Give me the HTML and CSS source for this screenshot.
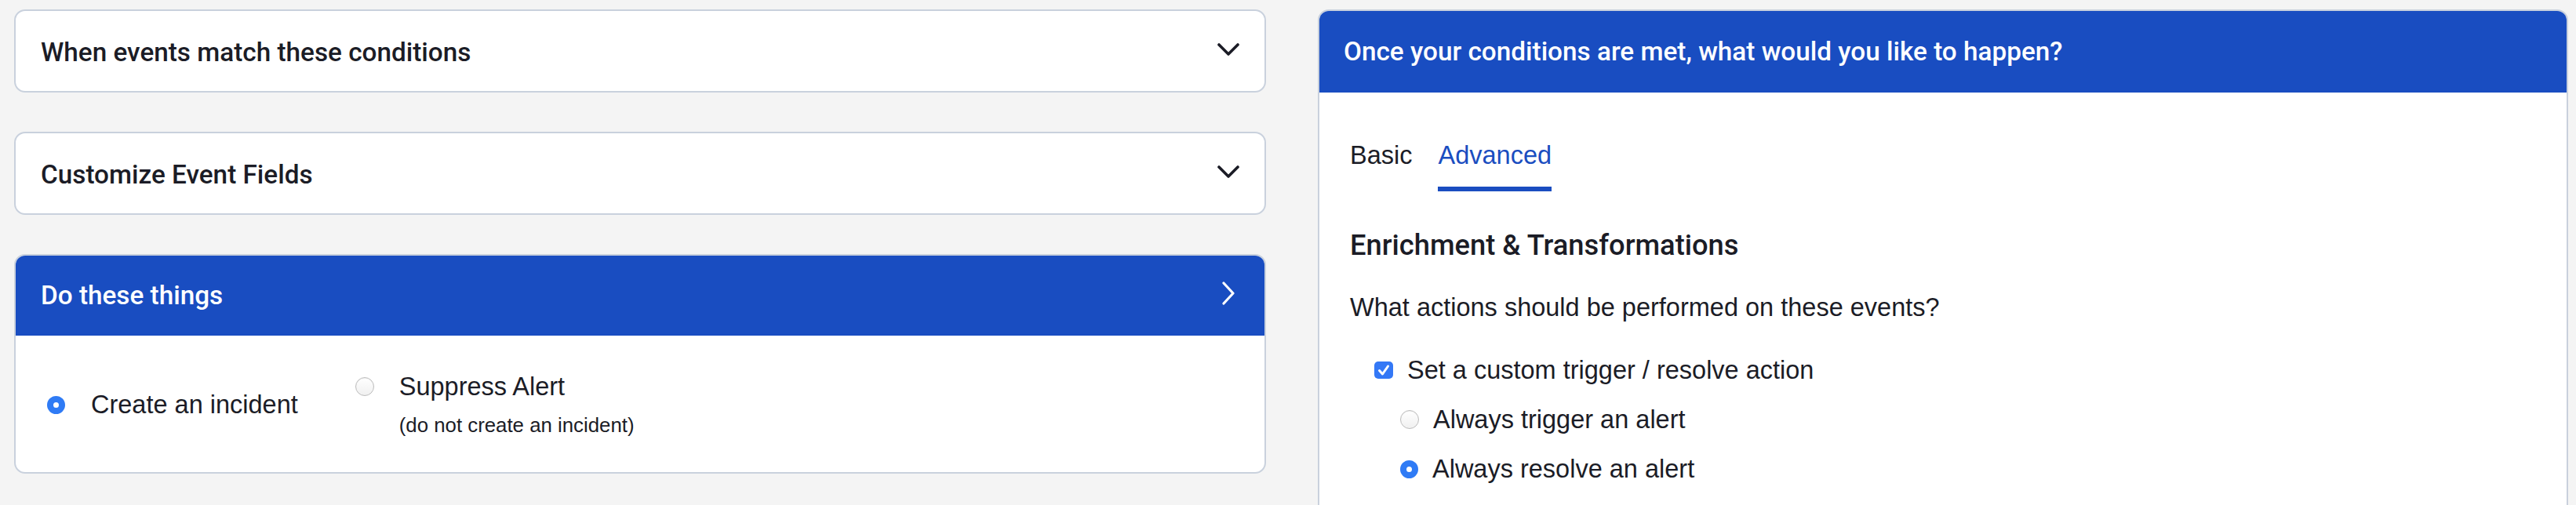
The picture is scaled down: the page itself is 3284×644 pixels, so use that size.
FILE: index.html
```html
<!DOCTYPE html>
<html lang="en">
<head>
<meta charset="utf-8">
<title>Event rule</title>
<link rel="stylesheet" href="styles.css">
</head>
<body>
<div class="page">
  <div class="left-col">
    <section class="card">
      <div class="card-head">
        <span class="card-title">When events match these conditions</span>
        <svg class="chev" width="28" height="28" viewBox="0 0 28 28"><polyline points="2,6 14,18 26,6" fill="none" stroke="#1b1c26" stroke-width="3.6" stroke-linecap="round" stroke-linejoin="round"/></svg>
      </div>
    </section>
    <section class="card">
      <div class="card-head">
        <span class="card-title">Customize Event Fields</span>
        <svg class="chev" width="28" height="28" viewBox="0 0 28 28"><polyline points="2,6 14,18 26,6" fill="none" stroke="#1b1c26" stroke-width="3.6" stroke-linecap="round" stroke-linejoin="round"/></svg>
      </div>
    </section>
    <section class="card">
      <div class="card-head blue">
        <span class="card-title">Do these things</span>
        <svg class="chev chev-r" width="28" height="30" viewBox="0 0 28 30"><polyline points="8,2 20,15 8,28" fill="none" stroke="#ffffff" stroke-width="3.2" stroke-linecap="round" stroke-linejoin="round"/></svg>
      </div>
      <div class="card-body">
        <div class="options">
          <div class="option">
            <span class="radio checked"></span>
            <span class="opt-label">Create an incident</span>
          </div>
          <div class="option">
            <span class="radio"></span>
            <span class="opt-label">Suppress Alert</span>
            <span class="opt-sub">(do not create an incident)</span>
          </div>
        </div>
      </div>
    </section>
  </div>

  <section class="panel">
    <div class="card-head blue panel-head">
      <span class="card-title">Once your conditions are met, what would you like to happen?</span>
    </div>
    <div class="panel-body">
      <nav class="tabs">
        <span class="tab">Basic</span>
        <span class="tab active">Advanced</span>
      </nav>
      <h2 class="section-title">Enrichment &amp; Transformations</h2>
      <p class="question">What actions should be performed on these events?</p>
      <div class="check-row">
        <span class="checkbox"><svg width="24" height="22" viewBox="0 0 24 22"><polyline points="6.5,11.5 10.5,16 17.5,6" fill="none" stroke="#ffffff" stroke-width="3" stroke-linecap="round" stroke-linejoin="round"/></svg></span>
        <span class="row-label">Set a custom trigger / resolve action</span>
      </div>
      <div class="radio-row">
        <span class="radio"></span>
        <span class="row-label">Always trigger an alert</span>
      </div>
      <div class="radio-row second">
        <span class="radio checked"></span>
        <span class="row-label">Always resolve an alert</span>
      </div>
    </div>
  </section>
</div>
</body>
</html>
```

FILE: styles.css
```css
* { box-sizing: border-box; }

html, body {
  margin: 0;
  background: #f4f4f4;
  overflow: hidden;
}

body {
  font-family: "Liberation Sans", Arial, sans-serif;
  font-size: 32.5px;
  color: #1b1c26;
}

.page {
  display: grid;
  grid-template-columns: 1596px 1594px;
  column-gap: 66px;
  padding: 12px 10px 0 18px;
  align-items: start;
}

.left-col {
  display: flex;
  flex-direction: column;
  gap: 50px;
}

.card {
  background: #ffffff;
  border: 2px solid #c9d1dd;
  border-radius: 14px;
  overflow: hidden;
}

.card-head {
  height: 102px;
  display: flex;
  align-items: center;
  justify-content: space-between;
  padding: 0 32px;
}

.card-head.blue {
  background: #194dc1;
  color: #ffffff;
}

.card-title {
  font-family: Roboto, "Liberation Sans", sans-serif;
  font-weight: 500;
  font-size: 33.3px;
  line-height: 38px;
  padding-top: 3px;
}

.card-head.blue .card-title {
  padding-top: 0;
}

.chev { display: block; flex: none; }
.chev-r { margin-top: -6px; }

.card-body {
  padding: 46px 40px 44px;
}

.options {
  display: flex;
  gap: 73px;
}

.option {
  display: grid;
  grid-template-columns: 24px auto;
  column-gap: 32px;
  align-items: center;
}

.opt-label {
  line-height: 38px;
}

.opt-sub {
  grid-column: 2;
  font-size: 25.8px;
  line-height: 32px;
  margin-top: 14px;
}

.radio {
  width: 24px;
  height: 24px;
  border-radius: 50%;
  border: 1px solid #bcbcbc;
  background: linear-gradient(#ffffff, #f0f0f0);
  box-shadow: inset 0 1px 1px rgba(0,0,0,0.06);
  display: block;
}

.radio.checked {
  border: 8px solid #2f7bf5;
  background: #ffffff;
  box-shadow: none;
  width: 23px;
  height: 23px;
}

.panel {
  background: #ffffff;
  border: 2px solid #c9d1dd;
  border-radius: 14px;
  overflow: hidden;
  min-height: 720px;
}

.panel-head {
  height: 104px;
  padding: 0 31px;
}

.panel-body {
  padding: 61px 39px 80px;
}

.tabs {
  display: flex;
  gap: 33px;
  line-height: 38px;
}

.tab {
  padding-bottom: 21px;
  border-bottom: 6px solid transparent;
}

.tab.active {
  color: #1a4dc0;
  border-bottom-color: #1a4dc0;
}

.section-title {
  margin: 47px 0 0;
  font-family: Roboto, "Liberation Sans", sans-serif;
  font-weight: 500;
  font-size: 36.3px;
  line-height: 44px;
}

.question {
  margin: 38px 0 0;
  line-height: 38px;
}

.check-row,
.radio-row {
  display: flex;
  align-items: center;
  line-height: 38px;
}

.check-row {
  margin: 42px 0 0 31px;
  gap: 18px;
}

.radio-row {
  margin: 25px 0 0 64px;
  gap: 18px;
}

.radio-row.second {
  margin-top: 25px;
}

.checkbox {
  width: 24px;
  height: 22px;
  border-radius: 5px;
  background: #3478f6;
  display: block;
}

.checkbox svg { display: block; }
```
